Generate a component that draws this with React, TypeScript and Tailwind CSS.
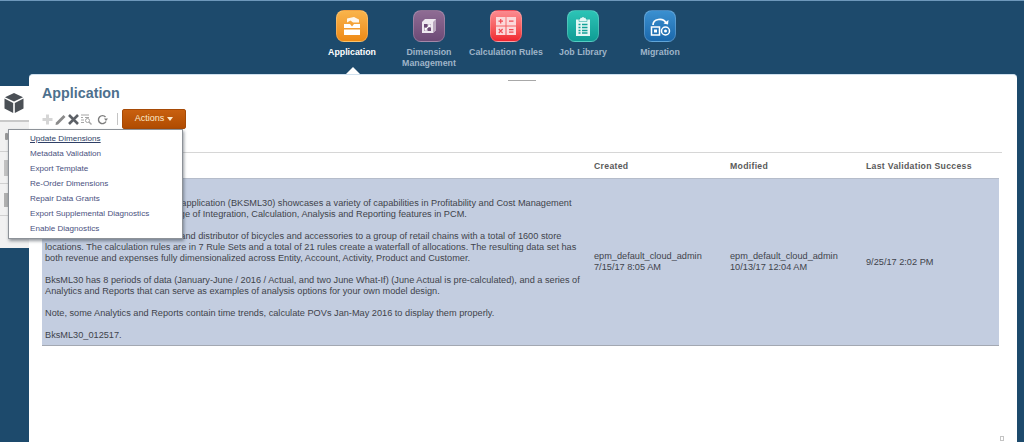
const NAV_ITEMS = [
  { id: "application", label: "Application", tile: "bg-gradient-to-b from-[#f9b44a] to-[#ee8a12]", active: true },
  { id: "dimension", label: "Dimension Management", tile: "bg-gradient-to-b from-[#8f6c94] to-[#6d4a76]", active: false },
  { id: "rules", label: "Calculation Rules", tile: "bg-gradient-to-b from-[#fb8a90] to-[#f0222e]", active: false },
  { id: "jobs", label: "Job Library", tile: "bg-gradient-to-b from-[#2cc4b6] to-[#0d9c94]", active: false },
  { id: "migration", label: "Migration", tile: "bg-gradient-to-b from-[#3b90d0] to-[#1a68ac]", active: false },
];

const MENU_ITEMS = [
  "Update Dimensions",
  "Metadata Validation",
  "Export Template",
  "Re-Order Dimensions",
  "Repair Data Grants",
  "Export Supplemental Diagnostics",
  "Enable Diagnostics",
];

const DESCRIPTION = [
  "The Bike Store 30 Sample Cloud application (BKSML30) showcases a variety of capabilities in Profitability and Cost Management",
  "Cloud, using a very broad coverage of Integration, Calculation, Analysis and Reporting features in PCM.",
  "",
  "BikeStore is a bike manufacturer and distributor of bicycles and accessories to a group of retail chains with a total of 1600 store",
  "locations. The calculation rules are in 7 Rule Sets and a total of 21 rules create a waterfall of allocations. The resulting data set has",
  "both revenue and expenses fully dimensionalized across Entity, Account, Activity, Product and Customer.",
  "",
  "BksML30 has 8 periods of data (January-June / 2016 / Actual, and two June What-If) (June Actual is pre-calculated), and a series of",
  "Analytics and Reports that can serve as examples of analysis options for your own model design.",
  "",
  "Note, some Analytics and Reports contain time trends, calculate POVs Jan-May 2016 to display them properly.",
  "",
  "BksML30_012517.",
];

function NavIcon({ id }: { id: string }) {
  if (id === "application") {
    return (
      <svg width="22" height="22" viewBox="0 0 22 22" fill="#fff">
        <path d="M6 3.5 13 2l5 2.5v3h-6L9.5 5.5 6 7.5z" opacity="0.9" />
        <path d="M3 9h6l2 2.5L13 9h6v4H3z" />
        <path d="M3 14.5h16V20H3z" />
      </svg>
    );
  }
  if (id === "dimension") {
    return (
      <svg width="22" height="22" viewBox="0 0 22 22">
        <path d="M4 7l3-3h11v11l-3 3H4z" fill="#efe8f0" />
        <path d="M15 7v11l3-3V4z" fill="#b9a6bd" />
        <path d="M6 9h7v7H6z" fill="#6d4a76" />
        <path d="M7 15l5-5M9.5 9.8H12.2V12.5M7 12.6V15.2H9.6" fill="none" stroke="#fff" strokeWidth="1.2" />
      </svg>
    );
  }
  if (id === "rules") {
    return (
      <svg width="24" height="24" viewBox="0 0 24 24">
        <path d="M2 3h9.5v8.5H2zM12.5 3H22v8.5h-9.5zM2 12.5h9.5V21H2zM12.5 12.5H22V21h-9.5z" fill="#fbd9da" />
        <path d="M6.7 5v4.5M4.5 7.2h4.5M15 7.2h4.5M4.8 15l3.8 4M8.6 15l-3.8 4M15 15.6h4.5M15 18.2h4.5" stroke="#ee4a52" strokeWidth="1.2" fill="none" />
      </svg>
    );
  }
  if (id === "jobs") {
    return (
      <svg width="22" height="22" viewBox="0 0 22 22">
        <path d="M4 4.5h14V21H4z" fill="#e4f7f5" />
        <path d="M8 4V2.5h1.8a1.3 1.3 0 0 1 2.4 0H14V4h1v2.5H7V4z" fill="#e4f7f5" stroke="#12a198" strokeWidth="0.5" />
        <path d="M6.5 9.5h2M10 9.5h5.5M6.5 12.5h2M10 12.5h5.5M6.5 15.5h2M10 15.5h5.5M6.5 18h2M10 18h5.5" stroke="#12a198" strokeWidth="1.3" />
      </svg>
    );
  }
  return (
    <svg width="24" height="24" viewBox="0 0 24 24" fill="none" stroke="#fff">
      <path d="M5 11c0-6 10-8 13-2" strokeWidth="1.7" />
      <path d="M15.5 9.5 20 10.5l.5-4.5z" fill="#fff" stroke="none" />
      <path d="M3.5 13h8v8h-8z" strokeWidth="1.5" />
      <path d="M6 15.5h3v3H6z" fill="#fff" stroke="none" />
      <circle cx="17.5" cy="17" r="4" strokeWidth="1.5" />
      <circle cx="17.5" cy="17" r="1.5" fill="#fff" stroke="none" />
    </svg>
  );
}

function ToolbarIcons() {
  return (
    <div className="flex items-center">
      <svg width="13" height="13" viewBox="0 0 13 13" className="ml-[-1px]">
        <path d="M5 1.5h3V5h3.5v3H8v3.5H5V8H1.5V5H5z" fill="#d5d5d5" />
      </svg>
      <svg width="13" height="13" viewBox="0 0 13 13">
        <path d="M2 9.5 9.5 2l2 2L4 11.5l-2.5.5z" fill="#8a8a8a" />
      </svg>
      <svg width="13" height="13" viewBox="0 0 13 13">
        <path d="M2 2l9 9M11 2l-9 9" stroke="#5c6066" strokeWidth="2.6" />
      </svg>
      <svg width="13" height="13" viewBox="0 0 13 13" fill="none" stroke="#a5a5a5">
        <path d="M1 2h8M1 4.5h2M5 4.5h4M1 7h3M1 9.5h3" />
        <circle cx="7.5" cy="7.5" r="2" />
        <path d="M9 9l2.5 2.5" strokeWidth="1.4" />
      </svg>
      <svg width="13" height="13" viewBox="0 0 13 13" fill="none" className="ml-[3px]">
        <path d="M10 8.5A4 4 0 1 1 9.5 4" stroke="#7d7d7d" strokeWidth="1.4" />
        <path d="M8 5.5h4l-2 2.6z" fill="#7d7d7d" />
      </svg>
      <div className="ml-[8px] h-[12px] w-px bg-[#c4c4c4]" />
    </div>
  );
}

function ActionsMenu() {
  return (
    <div className="absolute left-[8px] top-[128px] z-10 h-[110px] w-[175px] border border-[#8d9298] bg-white pt-[1px] pl-[21px] shadow-[1px_2px_3px_rgba(60,70,80,0.55)]">
      {MENU_ITEMS.map((item, idx) => (
        <div
          key={item}
          className={`h-[15px] text-[8.1px] leading-[15px] ${idx === 0 ? "text-[#2f3f66] underline" : "text-[#4a5180]"}`}
        >
          {item}
        </div>
      ))}
    </div>
  );
}

function SideRail() {
  return (
    <div className="mt-[12px] h-[162px] w-[29px] shrink-0 bg-white">
      <div className="flex h-[34px] items-center pl-[4px]">
        <svg width="20" height="22" viewBox="0 0 20 22" fill="#4a4f55">
          <path d="M10 1l9 4.2L10 9.6 1 5.2z" />
          <path d="M.5 6.6 9.2 11v10L.5 16.6z" />
          <path d="M19.5 6.6 10.8 11v10l8.7-4.4z" />
        </svg>
      </div>
      <div className="h-[128px] border-t-2 border-[#c9c9c9] bg-[#f1f1f1]">
        <div className="flex h-[30px] items-center justify-end border-b border-[#d0d0d0] pr-[21px]">
          <div className="h-[7px] w-[3px] rounded-[1px] bg-[#9a9a9a]" />
        </div>
        <div className="flex h-[32px] items-center border-b border-[#d0d0d0] pl-[4px]">
          <div className="h-[16px] w-[6px] bg-[#c2c2c2]" />
        </div>
        <div className="flex h-[32px] items-center border-b border-[#d0d0d0] pl-[4px]">
          <div className="h-[14px] w-[6px] bg-[#b0b0b0]" />
        </div>
        <div className="ml-[12px] mt-[14px] h-[8px] w-[11px] border border-[#8a8a8a]" />
      </div>
    </div>
  );
}

export default function App() {
  return (
    <div className="relative h-[442px] w-[1024px] overflow-hidden border-t border-[#6d98bb] bg-[#1d4a6c] font-['Liberation_Sans',Arial,sans-serif]">
      <nav className="flex h-[73px] justify-center pr-[12px] pt-[9px]">
        {NAV_ITEMS.map((item) => (
          <div key={item.id} className="relative flex w-[77px] flex-col items-center">
            <div className={`flex h-[32px] w-[32px] items-center justify-center rounded-[8px] border border-white/20 ${item.tile}`}>
              <NavIcon id={item.id} />
            </div>
            <div className={`mt-[5px] text-center text-[8.8px] font-bold leading-[11px] ${item.active ? "text-white" : "text-[#9fb4c8]"}`}>
              {item.label}
            </div>
            {item.active && (
              <div className="absolute bottom-0 left-[32px] h-0 w-0 border-x-[7px] border-b-[7px] border-x-transparent border-b-white" />
            )}
          </div>
        ))}
      </nav>

      <div className="flex h-[368px]">
        <SideRail />
        <main className="relative mr-[7px] flex-1 rounded-t-[4px] border-t border-[#cfe0ee] bg-white pl-[13px] pr-[15px]">
          <div className="absolute left-[479px] top-[5px] h-px w-[28px] bg-[#a8a8a8]" />
          <h1 className="pt-[9px] text-[14.3px] font-bold leading-[18px] text-[#4d708d]">Application</h1>

          <div className="mt-[7px] flex h-[20px] items-center">
            <ToolbarIcons />
            <button className="ml-[4px] flex h-[20px] w-[64px] items-center justify-center gap-[3px] rounded-[2px] border border-[#a64a06] bg-gradient-to-b from-[#c9600f] to-[#b04c02] text-[9px] text-[#fde9c9]">
              Actions
              <span className="h-0 w-0 border-x-[3.5px] border-t-[4px] border-x-transparent border-t-[#fde9c9]" />
            </button>
          </div>

          <div className="mt-[23px] border-t border-[#d6d6d6]">
            <div className="grid h-[25px] grid-cols-[552px_136px_136px_1fr] items-center pt-[2px] text-[8.7px] font-bold tracking-[0.3px] text-[#5a5a5a]">
              <div />
              <div>Created</div>
              <div>Modified</div>
              <div>Last Validation Success</div>
            </div>
            <div className="mr-[3px] grid h-[168px] grid-cols-[552px_136px_136px_1fr] border-t border-[#b5bcca] border-b border-b-[#a3a8b2] bg-[#c3cde0] text-[9.2px] leading-[11px] text-[#3f434b]">
              <div className="pl-[3px] pt-[19px]">
                {DESCRIPTION.map((line, idx) => (
                  <div key={idx} className="h-[11px] whitespace-nowrap">{line}</div>
                ))}
              </div>
              <div className="self-center">
                <div>epm_default_cloud_admin</div>
                <div>7/15/17 8:05 AM</div>
              </div>
              <div className="self-center">
                <div>epm_default_cloud_admin</div>
                <div>10/13/17 12:04 AM</div>
              </div>
              <div className="self-center">9/25/17 2:02 PM</div>
            </div>
          </div>

          <div className="absolute bottom-[1px] right-[13px] h-[5px] w-[4px] border border-[#c4c4c4]" />
        </main>
      </div>

      <ActionsMenu />
    </div>
  );
}
